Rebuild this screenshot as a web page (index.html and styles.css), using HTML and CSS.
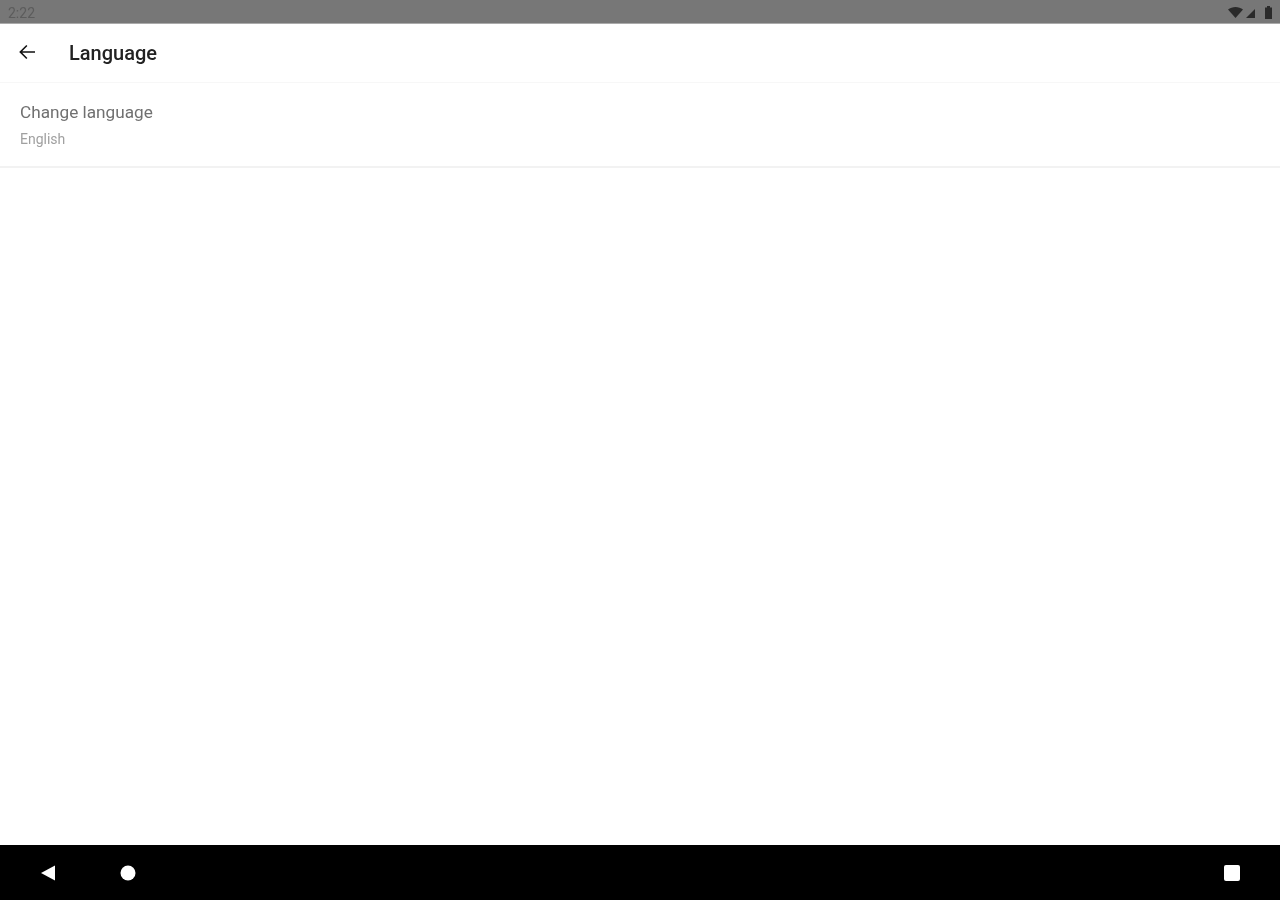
FILE: index.html
```html
<!DOCTYPE html>
<html lang="en">
<head>
    <meta charset="UTF-8">
    <title>Language</title>
    <link rel="stylesheet" href="styles.css">
</head>
<body>

<!-- Status bar -->
<div class="status-bar">
    <span class="clock">2:22</span>
    <div class="status-icons">
        <svg class="wifi" width="15" height="11" viewBox="0 0 15 11"><path d="M0 2.500C2 1 4.800 0 7.500 0S13 1 15 2.500L7.500 11Z"/></svg>
        <svg class="signal" width="10" height="9" viewBox="0 0 10 9"><path d="M9 0V9H0Z"/></svg>
        <svg class="battery" width="7" height="13" viewBox="0 0 7 13"><path d="M2 0H5V1.500H7V13H0V1.500H2Z"/></svg>
    </div>
</div>

<!-- Toolbar -->
<header class="toolbar">
    <svg class="back-arrow" width="18" height="18" viewBox="0 0 18 18"><path d="M17 8.200H4.200L9.400 3 8.300 1.900 1.200 9l7.100 7.100 1.100-1.100-5.200-5.200H17Z"/></svg>
    <h1>Language</h1>
</header>

<!-- Settings list -->
<main class="content">
    <div class="setting-row">
        <div class="setting-title">Change language</div>
        <div class="setting-value">English</div>
    </div>
</main>

<!-- Navigation bar -->
<nav class="nav-bar">
    <div class="nav-left">
        <svg width="16" height="16" viewBox="0 0 16 16"><path d="M15 0.500V15.500L1 8Z"/></svg>
        <svg width="16" height="16" viewBox="0 0 16 16"><circle cx="8" cy="8" r="7.500"/></svg>
    </div>
    <svg width="16" height="16" viewBox="0 0 16 16"><rect x="0" y="0" width="16" height="16" rx="2"/></svg>
</nav>

</body>
</html>
```

FILE: styles.css
```css
html, body {
    height: 100%;
}
body {
    margin: 0;
    font-family: Roboto, "Liberation Sans", sans-serif;
    background-color: #fff;
    display: flex;
    flex-direction: column;
    overflow: hidden;
}
/* the source shot is soft, so text and icons get a slight blur */
.clock, .status-icons, .toolbar h1, .back-arrow, .setting-title, .setting-value, .nav-bar svg {
    filter: blur(0.7px);
}
.status-bar {
    height: 23px;
    background-color: #777;
    border-bottom: 1px solid #aaa;
    display: flex;
    align-items: center;
    justify-content: space-between;
    padding: 0 8px;
}
.clock {
    font-size: 14px;
    color: #5c5c5c;
    padding-top: 2px;
}
.status-icons {
    display: flex;
    align-items: center;
    padding-top: 1px;
}
.status-icons svg {
    fill: #2a2a2a;
}
.signal {
    margin: 2px 0 0 3px;
}
.battery {
    margin-left: 9px;
}
.toolbar {
    height: 58px;
    display: flex;
    align-items: center;
    padding-left: 18px;
    border-bottom: 1px solid #f7f7f7;
}
.back-arrow {
    fill: #111;
    margin-bottom: 2px;
}
.toolbar h1 {
    margin: 0 0 0 33px;
    font-size: 20px;
    font-weight: 500;
    color: #222;
}
.content {
    flex: 1;
}
.setting-row {
    height: 83px;
    padding: 0 20px;
    border-bottom: 2px solid #f2f2f2;
    display: flex;
    flex-direction: column;
    justify-content: center;
    gap: 9px;
}
.setting-title {
    font-size: 17.2px;
    color: #707070;
}
.setting-value {
    font-size: 14px;
    color: #a0a0a0;
}
.nav-bar {
    height: 55px;
    background-color: #000;
    display: flex;
    align-items: center;
    justify-content: space-between;
    padding: 0 40px;
}
.nav-bar svg {
    fill: #fff;
    flex-shrink: 0;
}
.nav-left {
    display: flex;
    align-items: center;
    gap: 64px;
}
```
